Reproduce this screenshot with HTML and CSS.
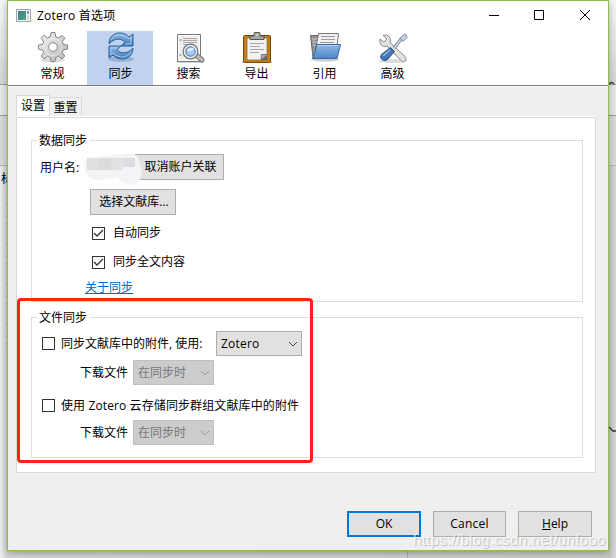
FILE: index.html
```html
<!DOCTYPE html>
<html lang="zh-CN">
<head>
<meta charset="utf-8">
<title>Zotero 首选项</title>
<link rel="stylesheet" href="styles.css">
</head>
<body>
<div class="backdrop">
  <div class="back-top"></div>
  <div class="back-band"></div>
  <div class="back-head"></div>
  <div class="back-list"><span class="back-char">标</span></div>
  <svg class="back-marks" width="616" height="558" viewBox="0 0 616 558">
    <path d="M6.5 196v150" stroke="#bcbcbc" stroke-dasharray="2 5 2 11"/>
    <path d="M609 84q3-3 5 0M609 427l4 4h3" fill="none" stroke="#333" stroke-width="1.3"/>
    <path d="M407.5 551v7" stroke="#aaa"/>
  </svg>
</div>
<main class="window">
  <header class="titlebar">
    <svg class="app-icon" width="15" height="13" viewBox="0 0 15 13">
      <defs><linearGradient id="app" x2="1" y2="1"><stop stop-color="#49799b"/><stop offset=".55" stop-color="#3f927e"/><stop offset="1" stop-color="#58a879"/></linearGradient></defs>
      <path d="M.5.5h14v12H.5z" fill="#f5f7f8" stroke="#9ba3a8"/><path d="M2 2h8v9H2z" fill="url(#app)"/><path d="M11 2h2v3h-2z" fill="#7195bd"/><path d="M11 6h2v5h-2z" fill="#d6dadd"/>
    </svg>
    <span class="title">Zotero 首选项</span>
    <svg class="controls" width="102" height="12" viewBox="0 0 102 12" fill="none" stroke="#000">
      <path d="M0 6.5h10M45.500 1.500h9v9h-9zM91 1l10 10M101 1L91 11"/>
    </svg>
  </header>
  <nav class="toolbar">
    <div class="tool">
      <svg width="32" height="32" viewBox="0 0 32 32">
        <defs><linearGradient id="gear" x2="1" y2="1"><stop stop-color="#f4f4f4"/><stop offset="1" stop-color="#b5b5b5"/></linearGradient></defs>
        <ellipse cx="16" cy="29" rx="12" ry="2.500" fill="#ddd"/>
        <path d="M14 1.500h4l.8 4.300 2.600 1.100L25 4.400l2.800 2.800-2.500 3.600 1.100 2.600 4.200.7v4l-4.200.8-1.100 2.600 2.500 3.600-2.800 2.800-3.600-2.500-2.600 1.100-.8 4.100h-4l-.8-4.100-2.600-1.100L7 27.900l-2.800-2.800 2.500-3.600-1.100-2.600-4.200-.8v-4l4.200-.7 1.100-2.600-2.500-3.600L7 4.400l3.600 2.500 2.600-1.100z" fill="url(#gear)" stroke="#858585"/>
        <circle cx="16" cy="16" r="8.500" fill="none" stroke="#fff" stroke-opacity=".5"/>
        <circle cx="16" cy="16" r="4.300" fill="#fff" stroke="#8b8b8b"/>
      </svg><span>常规</span>
    </div>
    <div class="tool active">
      <svg width="32" height="32" viewBox="0 0 32 32">
        <defs><linearGradient id="sync" y2="1" x2="0"><stop stop-color="#8cb9e7"/><stop offset="1" stop-color="#3f79bb"/></linearGradient></defs>
        <ellipse cx="16" cy="28" rx="13" ry="3" fill="#859fc3" opacity=".65"/>
        <g fill="url(#sync)" stroke="#2d639e" stroke-linejoin="round"><path d="M4 13C4 1 18-1 24 6l4-3v12H16l4-4C16 7 9 7 4 13z"/><path d="M28 17c0 12-14 14-20 7l-4 3V15h12l-4 4c4 4 11 4 16-2z"/></g>
        <path d="M6 9C9 3 17 2 24 8l2-2v7h-6M26 21c-4 6-11 7-18 1l-2 2v-7h6" fill="none" stroke="#bdd8f3" stroke-width=".8"/>
      </svg><span>同步</span>
    </div>
    <div class="tool">
      <svg width="32" height="32" viewBox="0 0 32 32">
        <ellipse cx="17" cy="31" rx="14" ry="1.500" fill="#d5d5d5"/>
        <path d="M4.500 3.500h23v27h-23z" fill="#eee" stroke="#777"/><path d="M5.500 4.500h21v25h-21z" fill="none" stroke="#fff"/>
        <path d="M6.500 9h2M6.500 24h2" stroke="#999" stroke-width="1.5"/><path d="M10 7.500h14M10 9.500h14M10 11.500h14M10 13.500h6" stroke="#aaa"/>
        <path d="M22 23l7 6" stroke="#777" stroke-width="5" stroke-linecap="round"/><path d="M22 23l7 6" stroke="#bbb" stroke-width="3" stroke-linecap="round"/>
        <circle cx="17.500" cy="20.500" r="6.500" fill="#dce9f6" stroke="#777" stroke-width="3"/><circle cx="17.500" cy="20.500" r="6" fill="#8fbbe9" stroke="#eee" stroke-width="1.500"/><circle cx="17.500" cy="20.500" r="4.600" fill="#a5cbf0" stroke="#5681bd"/><path d="M14 20q1-4 7-3-1 4-7 3z" fill="#dceeff"/>
      </svg><span>搜索</span>
    </div>
    <div class="tool">
      <svg width="32" height="32" viewBox="0 0 32 32">
        <path d="M1 31h30" stroke="#ccc" stroke-width="2"/>
        <rect x="2.500" y="4.500" width="27" height="27" rx="1" fill="#c37c1b" stroke="#754806"/>
        <path d="M6 7h20v22H6z" fill="#f2f2f2" stroke="#8c7551" stroke-width=".8"/>
        <path d="M9 12.500h14M9 15.500h10M9 18.500h14M9 21.500h9" stroke="#aaa"/>
        <path d="M20.500 23.500h5.500L20 29z" fill="#b4b4b4" stroke="#777"/><path d="M26 24v5h-6z" fill="#666"/>
        <path d="M9 8.500V5h4V2.500q0-1 1-1h4q1 0 1 1V5h4v3.500z" fill="#a9aaa5" stroke="#555753"/><path d="M15 4h2" stroke="#eee"/>
      </svg><span>导出</span>
    </div>
    <div class="tool">
      <svg width="32" height="32" viewBox="0 0 32 32">
        <defs><linearGradient id="fold" x2="0" y2="1"><stop stop-color="#8fb7e5"/><stop offset="1" stop-color="#4f85c4"/></linearGradient></defs>
        <ellipse cx="16" cy="28.500" rx="14" ry="2" fill="#ccc"/>
        <path d="M1.500 4.500h10l2 3v19H4z" fill="#929292" stroke="#666"/><path d="M3 8h8M3.500 11h8M4 14h7" stroke="#ccc"/>
        <path d="M9.500 2.500h20l-2 17h-21z" fill="#f2f2f2" stroke="#777"/><path d="M12 5.500h14M12 8.500h14M11 11.500h14" stroke="#999"/>
        <path d="M7.500 13.500h24L28 27.500H3.500q3-5 4-14z" fill="url(#fold)" stroke="#3465a4"/><path d="M8.500 14.500h21" stroke="#b9d2ef"/>
      </svg><span>引用</span>
    </div>
    <div class="tool">
      <svg width="32" height="32" viewBox="0 0 32 32">
        <ellipse cx="16" cy="30" rx="14" ry="2" fill="#ddd"/>
        <path d="M6 4.500c5-2 9 3 7 7l15 14c3 4-2 7-4 4L10 15c-5 2-8-2-7-7l4 3 3-3z" fill="#e2e2e0" stroke="#888a85"/>
        <path d="M24.500 7.500L17 17" stroke="#7d8b99" stroke-width="3.500"/><path d="M24.500 7.500L17 17" stroke="#cfd8e1" stroke-width="1.500"/>
        <path d="M23 7l4-3.500 2.500.5.500 2.500-4 4z" fill="#c2d0df" stroke="#7d91a8"/>
        <path d="M13.500 16.500l4 4-7 8c-3 3-9-1-6-5z" fill="#4377b5" stroke="#204a87"/><path d="M13 19l-7 6" stroke="#98bce3" stroke-width="1.500"/>
      </svg><span>高级</span>
    </div>
  </nav>
  <section class="content">
    <div class="tabs"><div class="tab selected">设置</div><div class="tab">重置</div></div>
    <div class="panel">
      <fieldset class="group data-group">
        <legend>数据同步</legend>
        <div class="user-row"><span>用户名:</span><button class="unlink">取消账户关联</button>
          <svg class="mask" width="58" height="34" viewBox="0 0 58 34">
            <path d="M3 6l45-5 5 3c4 8 8 20 0 27-7 4-16 1-19-6-8 2-17 4-24 3C0 25-2 11 3 6z" fill="#f4f4f4"/>
            <path d="M3 6h12v12H3z" fill="#dfdfdf"/><path d="M15 6h12v12H15z" fill="#dcdadb"/><path d="M27 6h12v12H27z" fill="#e2e2e2"/><path d="M39 6h12v9H39z" fill="#dddce0"/><path d="M39 15h12v15H39z" fill="#f2f4f7"/>
          </svg>
        </div>
        <button class="library">选择文献库...</button>
        <label class="check-row first"><span class="check"><svg width="11" height="11" viewBox="0 0 11 11"><path d="M1 5l3 3 6-6" fill="none" stroke="#333" stroke-width="1.300"/></svg></span>自动同步</label>
        <label class="check-row"><span class="check"><svg width="11" height="11" viewBox="0 0 11 11"><path d="M1 5l3 3 6-6" fill="none" stroke="#333" stroke-width="1.300"/></svg></span>同步全文内容</label>
        <a class="about">关于同步</a>
      </fieldset>
      <fieldset class="group file-group">
        <legend>文件同步</legend>
        <div class="file-row"><span class="check"></span><span class="file-label">同步文献库中的附件, 使用:</span><div class="select zotero">Zotero<svg width="10" height="6" viewBox="0 0 10 6"><path d="M1 1l4 4 4-4"/></svg></div></div>
        <div class="download-row"><span>下载文件</span><div class="select disabled">在同步时<svg width="10" height="6" viewBox="0 0 10 6"><path d="M1 1l4 4 4-4"/></svg></div></div>
        <div class="file-row cloud"><span class="check"></span><span>使用 Zotero 云存储同步群组文献库中的附件</span></div>
        <div class="download-row"><span>下载文件</span><div class="select disabled">在同步时<svg width="10" height="6" viewBox="0 0 10 6"><path d="M1 1l4 4 4-4"/></svg></div></div>
      </fieldset>
    </div>
    <footer class="actions"><button class="primary">OK</button><button class="cancel">Cancel</button><button><u>H</u>elp</button></footer>
  </section>
</main>
<div class="highlight"></div>
<div class="watermark">https://blog.csdn.net/unfooo</div>
</body>
</html>
```
FILE: styles.css
```css
* { box-sizing: border-box; }
body {
  margin: 0;
  width: 616px;
  height: 558px;
  overflow: hidden;
  position: relative;
  font: 12px/18px "Open Sans", "Noto Sans CJK SC", sans-serif;
  color: #000;
  white-space: nowrap;
}
.backdrop { position: absolute; inset: 0; background: #ddd; display: flex; flex-direction: column; }
.back-top { height: 85px; background: linear-gradient(#f7f7f7, #d5d5d5); border-bottom: 1px solid #999; }
.back-band { height: 31px; background: #e7e7e7; border-bottom: 1px solid #999; }
.back-head { height: 50px; background: #d9d9d9; border-bottom: 1px solid #b5b5b5; }
.back-list { flex: 1; background: linear-gradient(90deg, #eee 0, #d4d4d4 7px, #c9c9c9 609px, #d8d8d8); padding: 4px 0 0 1px; }
.back-marks { position: absolute; inset: 0; }
.window {
  position: relative;
  display: flex;
  flex-direction: column;
  width: 602px;
  height: 551px;
  margin-left: 7px;
  border: 1px solid #91bd4b;
  background: #efefef;
  box-shadow: 0 2px 7px rgba(0, 0, 0, .3);
}
.titlebar { height: 30px; background: #fff; display: flex; align-items: center; padding: 0 17px 2px 8px; }
.title { margin: 2px 0 0 6px; letter-spacing: .2px; }
.controls { margin-left: auto; }
.toolbar { height: 55px; flex: none; background: #fff; border-bottom: 1px solid #7c7f79; display: flex; gap: 2px; padding-left: 11px; }
.tool { width: 66px; display: flex; flex-direction: column; align-items: center; line-height: 22px; padding-left: 1px; }
.tool.active { background: #c1d2ee; }
.tool svg { display: block; flex: none; }
.content { flex: 1; padding: 9px 12px 0 8px; border-top: 1px solid #fafafa; }
.tabs { display: flex; align-items: flex-end; height: 21px; border-bottom: 1px solid #fff; }
.tab { width: 32px; height: 19px; line-height: 19px; border: 1px solid #d9d9d9; border-width: 1px 1px 0 0; text-align: center; background: #f0f0f0; }
.tab.selected { width: 34px; height: 21px; line-height: 20px; border-left-width: 1px; background: #fff; }
.panel { width: 580px; height: 356px; border: 1px solid #dadada; background: #fff; padding: 14px 12px 0 14px; }
.group { margin: 0; padding: 0; border: 1px solid #dcdcdc; min-width: 0; }
.group legend { margin-left: 5px; padding: 0 3px 0 2px; height: 17px; line-height: 17px; }
.data-group { height: 170px; }
.file-group { height: 149px; margin-top: 7px; }
.user-row { position: relative; display: flex; align-items: center; height: 26px; padding: 2px 0 0 8px; margin-top: 5px; }
.mask { position: absolute; left: 52px; top: -2px; }
button { font: inherit; height: 26px; padding: 0; border: 1px solid #adadad; border-radius: 0; background: #e1e1e1; color: #000; }
.unlink { position: absolute; left: 103px; top: 0; width: 89px; padding-left: 2px; }
.library { display: block; width: 86px; margin: 9px 0 0 58px; padding-left: 2px; }
.check-row { display: flex; align-items: center; height: 18px; margin: 11px 0 0 60px; gap: 8px; }
.check-row.first { margin-top: 9px; }
.check { display: block; flex: none; width: 13px; height: 13px; border: 1px solid #333; background: #fff; }
.check svg { display: block; }
.about { display: block; margin: 8px 0 0 53px; color: #0066cc; text-decoration: underline; }
.file-row { display: flex; align-items: center; height: 25px; padding-left: 10px; gap: 6px; margin-top: 5px; }
.file-label { width: 149px; }
.select { width: 86px; height: 25px; border: 1px solid #adadad; background: #e1e1e1; display: flex; align-items: center; justify-content: space-between; padding: 0 3px 0 4px; }
.select svg { fill: none; stroke: #444; }
.select.zotero { letter-spacing: .2px; }
.select.disabled { width: 81px; background: #ccc; border-color: #bfbfbf; color: #787878; }
.disabled svg { stroke: #999; }
.download-row { display: flex; align-items: center; height: 25px; margin-top: 4px; padding-left: 48px; gap: 5px; }
.file-row.cloud { margin-top: 8px; letter-spacing: .11px; }
.file-row.cloud + .download-row { margin-top: 2px; }
.actions { display: flex; justify-content: flex-end; gap: 12px; margin-top: 38px; padding-right: 4px; }
.actions button { width: 74px; }
.actions .cancel { width: 73px; letter-spacing: .2px; }
.actions .primary { border: 2px solid #0078d7; }
.highlight { position: absolute; left: 17px; top: 298px; width: 296px; height: 165px; border: 3px solid #ff2514; border-radius: 4px; }
.watermark { position: absolute; left: 413px; top: 530px; font: 15px/20px "Liberation Sans", sans-serif; letter-spacing: .3px; color: rgba(255, 255, 255, .75); text-shadow: 1px 1px 1px rgba(0, 0, 0, .22); }
```
